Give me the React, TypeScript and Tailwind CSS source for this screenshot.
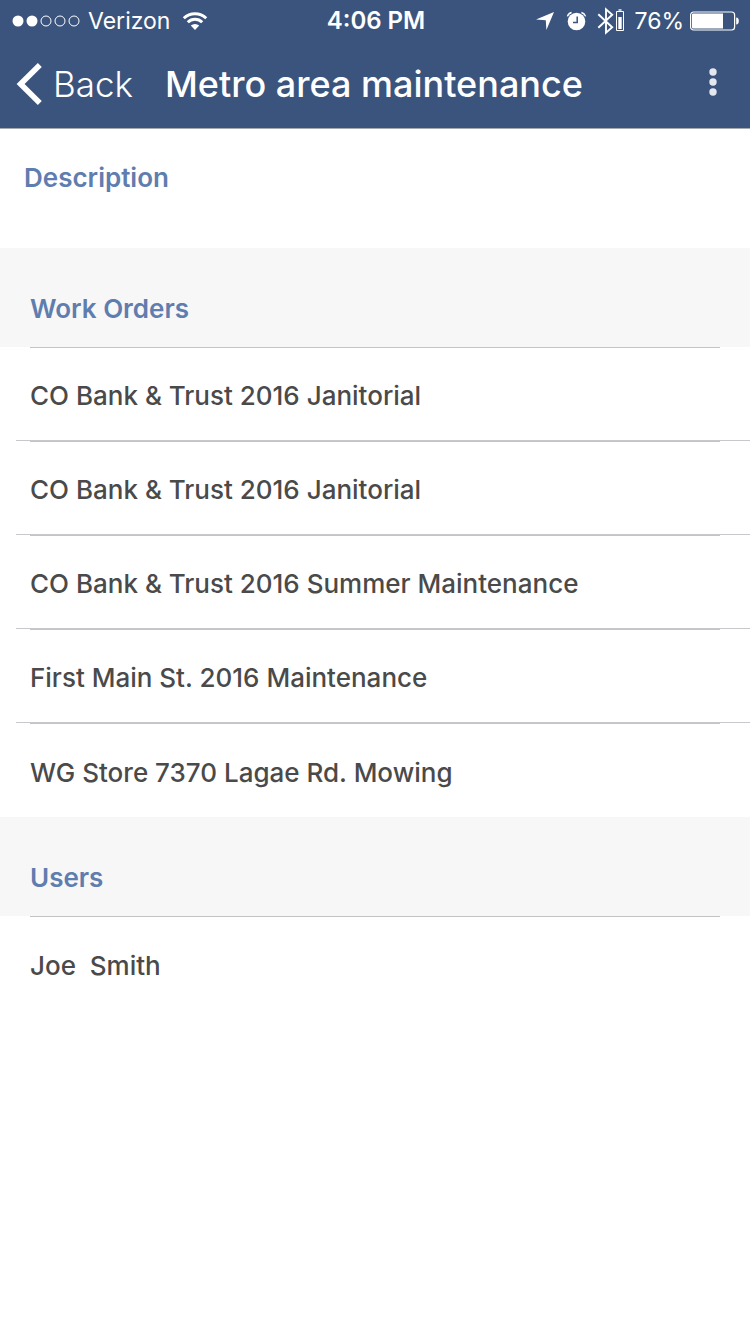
import React from 'react';

const workOrders = [
  'CO Bank & Trust 2016 Janitorial',
  'CO Bank & Trust 2016 Janitorial',
  'CO Bank & Trust 2016 Summer Maintenance',
  'First Main St. 2016 Maintenance',
  'WG Store 7370 Lagae Rd. Mowing',
];

const users = ['Joe  Smith'];

function SignalDots() {
  return (
    <svg width="68" height="12" viewBox="0 0 68 12" aria-hidden="true">
      {[6, 20, 34, 48, 62].map((cx, i) => (
        <circle
          key={cx}
          cx={cx}
          cy="6"
          r={i < 2 ? 5.5 : 5}
          fill={i < 2 ? '#fff' : 'none'}
          stroke={i < 2 ? 'none' : '#fff'}
          strokeWidth="1"
        />
      ))}
    </svg>
  );
}

function WifiIcon() {
  return (
    <svg width="26" height="20" viewBox="0 0 26 20" fill="none" stroke="#fff" strokeWidth="3" aria-hidden="true">
      <path d="M1.8 7.2a16 16 0 0 1 22.4 0" />
      <path d="M5.8 11.2a10.3 10.3 0 0 1 14.4 0" />
      <path d="M13 18.9l-4.2-4.3a6 6 0 0 1 8.4 0z" fill="#fff" stroke="none" />
    </svg>
  );
}

function StatusIcons() {
  return (
    <>
      <svg width="18" height="18" viewBox="0 0 18 18" aria-hidden="true">
        <path d="M18 0 10.4 18 9.8 8.2 0 7.6z" fill="#fff" />
      </svg>
      <svg className="ml-3" width="22" height="20" viewBox="0 0 22 20" fill="none" aria-hidden="true">
        <circle cx="10.5" cy="10.5" r="8.8" fill="#fff" />
        <path d="M11.2 5.4v6H7" stroke="#3b547d" strokeWidth="1.5" />
        <path d="M1.4 5.4A6 6 0 0 1 5.6 1.5M19.6 5.4a6 6 0 0 0-4.2-3.9" stroke="#fff" strokeWidth="1.4" />
      </svg>
      <svg className="ml-[9px]" width="18" height="28" viewBox="0 0 18 28" fill="none" stroke="#fff" strokeWidth="1.9" aria-hidden="true">
        <path d="M1.3 7.2 15.2 20.3 9 25.7V2.3l6.2 5.4L1.3 20.8" />
      </svg>
      <svg className="ml-px" width="8" height="24" viewBox="0 0 8 24" fill="none" aria-hidden="true">
        <path d="M2.5 1h3" stroke="#fff" strokeWidth="1.4" />
        <path d="M.5 2.5h7v19h-7z" stroke="#fff" strokeWidth="1" />
        <path d="M2.3 8h3.4v12H2.3z" fill="#fff" />
      </svg>
    </>
  );
}

function BatteryIcon() {
  return (
    <svg width="50" height="20" viewBox="0 0 50 20" fill="none" aria-hidden="true">
      <rect x=".6" y="1" width="44" height="18" rx="3" stroke="#fff" strokeWidth="1.2" />
      <path d="M2 3.5a1 1 0 0 1 1-1h30v15H3a1 1 0 0 1-1-1z" fill="#fff" />
      <path d="M46.2 6.5c1.8.2 2.6 1 2.6 3.5s-.8 3.3-2.6 3.5z" fill="#fff" />
    </svg>
  );
}

function Section({ title, items }: { title: string; items: string[] }) {
  return (
    <section>
      <h2 className="flex h-[99px] items-center bg-[#f7f7f7] px-[30px] pt-[22px] text-[26px] leading-8 font-semibold text-[#5f7dae]">
        {title}
      </h2>
      <ul>
        {items.map((item, i) => (
          <li key={i} className="group flex h-[94px] flex-col">
            <div className="mx-[30px] h-px bg-[#c4c4c4]" />
            <a href="#" className="flex flex-1 items-center px-[30px] pt-1 text-[26px] leading-8 font-medium whitespace-pre text-[#4a4a4a]">
              {item}
            </a>
            <div className="ml-4 h-px bg-[#c8c7cc] group-last:hidden" />
          </li>
        ))}
      </ul>
    </section>
  );
}

export default function App() {
  return (
    <div className="min-h-screen bg-white font-['Inter','Liberation_Sans',sans-serif]">
      <header className="border-b border-[#a5a8ad] bg-[#3b547d] text-white">
        <div className="grid h-10 grid-cols-[1fr_auto_1fr] items-center pt-0.5 pr-2.5 pl-3 text-[23px] leading-7">
          <div className="flex items-center">
            <SignalDots />
            <span className="ml-2">Verizon</span>
            <span className="ml-3"><WifiIcon /></span>
          </div>
          <time className="text-2xl leading-7 font-semibold">4:06 PM</time>
          <div className="flex items-center justify-end">
            <StatusIcons />
            <span className="mr-1.5 ml-2.5">76%</span>
            <BatteryIcon />
          </div>
        </div>
        <div className="flex h-[88px] items-center pr-[15px] pl-4">
          <button type="button" className="flex items-center gap-2.5 text-[35px] leading-10 font-light">
            <svg width="27" height="42" viewBox="0 0 27 42" fill="none" stroke="#fff" strokeWidth="5.6" aria-hidden="true">
              <path d="M23.8 2 4.6 21l19.2 19" />
            </svg>
            Back
          </button>
          <h1 className="ml-8 flex-1 text-[36px] leading-10 font-medium whitespace-nowrap">Metro area maintenance</h1>
          <button type="button" aria-label="More options" className="flex h-11 w-11 items-center justify-center pb-1">
            <svg width="8" height="28" viewBox="0 0 8 28" fill="#e4e7ee" aria-hidden="true">
              <circle cx="4" cy="4" r="3.7" />
              <circle cx="4" cy="14" r="3.7" />
              <circle cx="4" cy="24" r="3.7" />
            </svg>
          </button>
        </div>
      </header>
      <main>
        <section className="h-[119px] px-6 pt-[33px]">
          <h2 className="text-[26px] leading-8 font-semibold text-[#5f7dae]">Description</h2>
        </section>
        <Section title="Work Orders" items={workOrders} />
        <Section title="Users" items={users} />
      </main>
    </div>
  );
}
